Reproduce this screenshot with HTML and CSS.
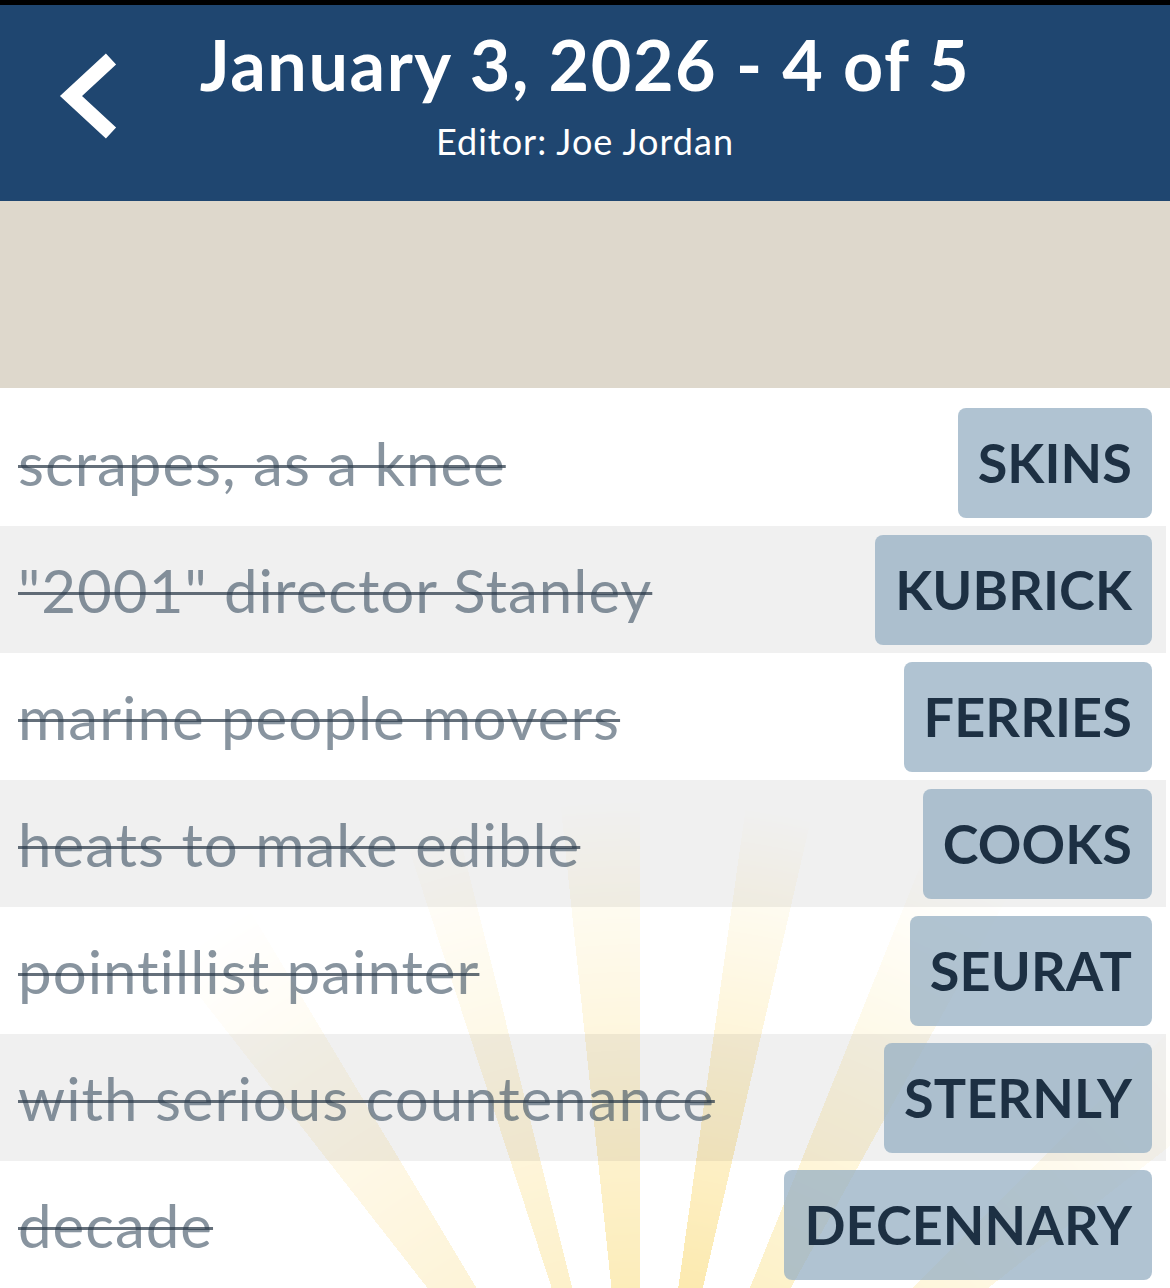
FILE: index.html
```html
<!DOCTYPE html>
<html>
<head>
<meta charset="utf-8">
<link rel="stylesheet" href="styles.css">
</head>
<body>
<div class="topbar"></div>
<header class="header">
  <button class="back" aria-label="Back">
    <svg width="70" height="100" viewBox="0 0 70 100"><path d="M52 8 L12 45 L52 82" fill="none" stroke="#fff" stroke-width="15" stroke-linejoin="miter"/></svg>
  </button>
  <div class="titles">
    <h1 class="title">January 3, 2026 - 4 of 5</h1>
    <div class="subtitle">Editor: Joe Jordan</div>
  </div>
</header>
<div class="banner"></div>
<main class="list">
  <div class="rays"></div>
  <div class="row"><span class="clue">scrapes, as a knee</span><span class="answer">SKINS</span></div>
  <div class="row alt"><span class="clue">"2001" director Stanley</span><span class="answer">KUBRICK</span></div>
  <div class="row"><span class="clue">marine people movers</span><span class="answer">FERRIES</span></div>
  <div class="row alt"><span class="clue">heats to make edible</span><span class="answer">COOKS</span></div>
  <div class="row"><span class="clue">pointillist painter</span><span class="answer">SEURAT</span></div>
  <div class="row alt"><span class="clue">with serious countenance</span><span class="answer">STERNLY</span></div>
  <div class="row"><span class="clue">decade</span><span class="answer">DECENNARY</span></div>
</main>
</body>
</html>
```
FILE: styles.css
```css
html, body {
  margin: 0;
  padding: 0;
}
body {
  width: 1170px;
  height: 1288px;
  overflow: hidden;
  background: #fff;
  font-family: Lato, "Open Sans", sans-serif;
}
.topbar {
  height: 5px;
  background: #000;
}
.header {
  height: 196px;
  background: #1f4670;
  position: relative;
  display: flex;
  justify-content: center;
}
.back {
  position: absolute;
  left: 59px;
  top: 46px;
  background: none;
  border: 0;
  padding: 0;
  width: 70px;
  height: 100px;
}
.back svg { display: block; }
.titles {
  display: flex;
  flex-direction: column;
  align-items: center;
  color: #fff;
}
.title {
  margin: 0;
  padding-top: 17px;
  font-size: 70px;
  line-height: 84px;
  font-weight: 700;
  letter-spacing: 1.6px;
}
.subtitle {
  font-size: 36px;
  line-height: 42px;
  font-weight: 400;
  letter-spacing: 1px;
  margin-top: 14px;
}
.banner {
  height: 187px;
  background: #ded8cc;
}
.list {
  position: relative;
  padding-top: 11px;
  background: #fff;
}
.rays {
  position: absolute;
  inset: 0;
  z-index: 0;
  background: conic-gradient(from 0deg at 640px 1172px,
    transparent 0deg 8deg, #fce9ad 8deg 13deg,
    transparent 13deg 22deg, #fdf0c4 22deg 29deg,
    transparent 29deg 45deg, #fdf2cf 45deg 52deg,
    transparent 52deg 322deg, #fdf2d2 322deg 329deg,
    transparent 329deg 342deg, #fdf0c8 342deg 346deg,
    transparent 346deg 354deg, #fcecb8 354deg 360deg);
  -webkit-mask-image: radial-gradient(circle at 640px 1172px, #000 260px, transparent 760px);
  mask-image: radial-gradient(circle at 640px 1172px, #000 260px, transparent 760px);
}
.row {
  position: relative;
  z-index: 1;
  height: 127px;
  padding: 0 14px 0 18px;
  box-sizing: border-box;
  width: 1166px;
  display: flex;
  align-items: center;
  justify-content: space-between;
}
.row.alt {
  background: rgba(0, 0, 0, 0.06);
}
.clue {
  font-size: 60px;
  font-weight: 400;
  letter-spacing: 1px;
  color: rgba(50, 70, 90, 0.58);
  text-decoration: line-through;
  text-decoration-color: rgba(40, 55, 70, 0.72);
  text-decoration-thickness: 3px;
  white-space: nowrap;
}
.answer {
  height: 110px;
  display: flex;
  align-items: center;
  padding: 0 20px;
  border-radius: 8px;
  background: rgba(150, 175, 195, 0.75);
  color: #1d3043;
  font-size: 54px;
  font-weight: 700;
  letter-spacing: 0.1px;
  white-space: nowrap;
}
```
